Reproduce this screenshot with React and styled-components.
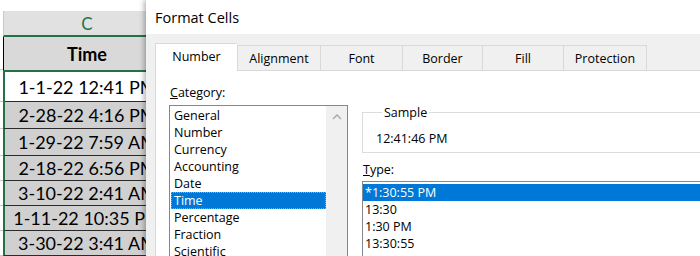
import React from 'react';
import styled, { createGlobalStyle } from 'styled-components';

const GlobalStyle = createGlobalStyle`
  html, body {
    margin: 0;
    padding: 0;
    background: #fff;
  }
  body {
    width: 700px;
    height: 256px;
    overflow: hidden;
  }
`;

const Page = styled.div`
  position: relative;
  width: 700px;
  height: 256px;
  overflow: hidden;
  background: #fff;
`;

/* ---------- spreadsheet behind the dialog ---------- */

const Sheet = styled.div`
  padding-top: 11px;
  width: 170px;
  font-family: Lato, 'Liberation Sans', sans-serif;
  color: #000;
`;

const Row = styled.div`
  display: grid;
  grid-template-columns: 3px 1fr;
  height: ${p => p.$h}px;
`;

const Stub = styled.div`
  background: #fff;
  border-bottom: ${p => (p.$line ? '1px solid #c6c6c6' : 'none')};
`;

const ColHeader = styled.div`
  display: flex;
  align-items: center;
  justify-content: center;
  background: #e1e1e1;
  border-left: 1px solid #c8c8c8;
  border-bottom: 2px solid #217346;
  color: #217346;
  font-size: 17px;
`;

const Cell = styled.div`
  display: flex;
  align-items: center;
  justify-content: center;
  background: ${p => p.$bg};
  border-left: ${p => (p.$sel ? '2px solid #217346' : '1px solid #000')};
  border-top: ${p => (p.$first ? '2px solid #217346' : 'none')};
  border-bottom: ${p => (p.$first || !p.$sel ? 'none' : '1px solid #2b2b2b')};
  box-shadow: ${p => (p.$first ? 'inset 0 -1px 0 #2b2b2b' : 'none')};
  font-size: 18px;
  font-weight: ${p => (p.$bold ? 700 : 400)};
  white-space: nowrap;
  overflow: hidden;
`;

/* ---------- Format Cells dialog ---------- */

const Dialog = styled.div`
  position: absolute;
  left: 146px;
  top: 0;
  width: 600px;
  height: 256px;
  display: flex;
  flex-direction: column;
  background: #f0f0f0;
  box-shadow: -2px 0 5px rgba(0, 0, 0, 0.3);
  font-family: 'Open Sans', 'Noto Sans', sans-serif;
  font-size: 12.5px;
  color: #000;
`;

const TitleBar = styled.div`
  flex-shrink: 0;
  height: 34px;
  display: flex;
  align-items: center;
  padding-left: 9px;
  background: #fff;
  font-size: 14.5px;
`;

const Body = styled.div`
  flex: 1;
  display: flex;
  flex-direction: column;
  padding: 9px 0 0 9px;
`;

const TabRow = styled.div`
  display: flex;
  align-items: flex-end;
  height: 27px;
`;

const Tab = styled.div`
  position: relative;
  z-index: ${p => (p.$active ? 1 : 0)};
  box-sizing: border-box;
  width: ${p => p.$w}px;
  height: ${p => (p.$active ? 28 : 25)}px;
  margin-bottom: ${p => (p.$active ? -1 : 0)}px;
  padding-bottom: ${p => (p.$active ? 2 : 0)}px;
  display: flex;
  align-items: center;
  justify-content: center;
  background: ${p => (p.$active ? '#fff' : '#f0f0f0')};
  border-top: 1px solid #d9d9d9;
  border-left: 1px solid #d9d9d9;
  border-right: ${p => (p.$last ? '1px solid #d9d9d9' : 'none')};
`;

const Panel = styled.div`
  flex: 1;
  display: flex;
  gap: 14px;
  padding: 13px 0 0 13px;
  background: #fff;
  border: 1px solid #d9d9d9;
`;

const LeftCol = styled.div`
  width: 179px;
  flex-shrink: 0;
  display: flex;
  flex-direction: column;
`;

const RightCol = styled.div`
  flex: 1;
  display: flex;
  flex-direction: column;
  padding-top: 20px;
`;

const Label = styled.div`
  height: 17px;
  line-height: 17px;
  margin-top: ${p => p.$mt || 0}px;
  margin-bottom: ${p => p.$mb || 0}px;
  padding-left: ${p => p.$pl || 0}px;
`;

const ListBox = styled.div`
  display: flex;
  height: 200px;
  border: 1px solid #828790;
  background: #fff;
`;

const Items = styled.div`
  flex: 1;
  padding: ${p => p.$pad};
`;

const Item = styled.div`
  height: 17px;
  line-height: 17px;
  padding-left: ${p => p.$pl}px;
  white-space: nowrap;
  background: ${p => (p.$sel ? '#0078d7' : 'transparent')};
  color: ${p => (p.$sel ? '#fff' : '#000')};
  outline: ${p => (p.$focus ? '1px dotted #e39a3a' : 'none')};
  outline-offset: -1px;
`;

const ScrollTrack = styled.div`
  width: 21px;
  display: flex;
  justify-content: center;
  padding-top: 8px;
  background: #f0f0f0;
`;

const Group = styled.fieldset`
  margin: 0;
  padding: 9px 0 5px 13px;
  border: 1px solid #dcdcdc;
  border-right: none;
`;

const Legend = styled.legend`
  margin-left: 6px;
  padding: 0 2px;
  line-height: 17px;
`;

const SampleText = styled.div`
  height: 17px;
  line-height: 17px;
`;

const ChevronUp = () => (
  <svg width="10" height="6" viewBox="0 0 10 6">
    <path d="M1 5 L5 1 L9 5" fill="none" stroke="#a6a6a6" strokeWidth="1.3" />
  </svg>
);

const rows = [
  { t: '1-1-22 12:41 PM', h: 32, bg: '#fff', first: true },
  { t: '2-28-22 4:16 PM', h: 27 },
  { t: '1-29-22 7:59 AM', h: 27 },
  { t: '2-18-22 6:56 PM', h: 25 },
  { t: '3-10-22 2:41 AM', h: 25 },
  { t: '1-11-22 10:35 PM', h: 25 },
  { t: '3-30-22 3:41 AM', h: 25 },
];

const tabs = [
  { label: 'Number', w: 82, active: true },
  { label: 'Alignment', w: 83 },
  { label: 'Font', w: 82 },
  { label: 'Border', w: 80 },
  { label: 'Fill', w: 81 },
  { label: 'Protection', w: 84, last: true },
];

const categories = ['General', 'Number', 'Currency', 'Accounting', 'Date', 'Time', 'Percentage', 'Fraction', 'Scientific'];
const types = ['*1:30:55 PM', '13:30', '1:30 PM', '13:30:55'];

export default function App() {
  return (
    <>
      <GlobalStyle />
      <Page>
        <Sheet>
          <Row $h={26}>
            <Stub />
            <ColHeader>C</ColHeader>
          </Row>
          <Row $h={33}>
            <Stub $line />
            <Cell $bg="#d9d9d9" $bold>Time</Cell>
          </Row>
          {rows.map(r => (
            <Row key={r.t} $h={r.h}>
              <Stub $line />
              <Cell $sel $first={r.first} $bg={r.bg || '#d0d0d0'}>{r.t}</Cell>
            </Row>
          ))}
        </Sheet>

        <Dialog>
          <TitleBar>Format Cells</TitleBar>
          <Body>
            <TabRow>
              {tabs.map(t => (
                <Tab key={t.label} $w={t.w} $active={t.active} $last={t.last}>
                  {t.label}
                </Tab>
              ))}
            </TabRow>
            <Panel>
              <LeftCol>
                <Label $mb={4} $pl={1}><u>C</u>ategory:</Label>
                <ListBox>
                  <Items $pad="1px 0 0 1px">
                    {categories.map(c => (
                      <Item key={c} $pl={3} $sel={c === 'Time'} $focus={c === 'Time'}>{c}</Item>
                    ))}
                  </Items>
                  <ScrollTrack>
                    <ChevronUp />
                  </ScrollTrack>
                </ListBox>
              </LeftCol>
              <RightCol>
                <Group>
                  <Legend>Sample</Legend>
                  <SampleText>12:41:46 PM</SampleText>
                </Group>
                <Label $mt={8} $mb={3} $pl={1}><u>T</u>ype:</Label>
                <ListBox>
                  <Items $pad="2px 0 0 0">
                    {types.map((t, i) => (
                      <Item key={t} $pl={2} $sel={i === 0}>{t}</Item>
                    ))}
                  </Items>
                </ListBox>
              </RightCol>
            </Panel>
          </Body>
        </Dialog>
      </Page>
    </>
  );
}
